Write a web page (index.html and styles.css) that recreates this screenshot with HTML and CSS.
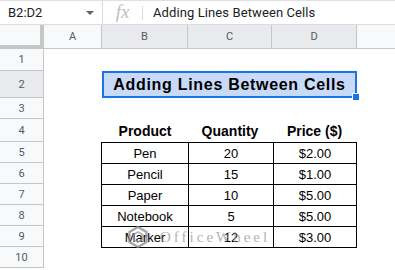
FILE: index.html
```html
<!DOCTYPE html>
<html lang="en">
<head>
    <link rel="stylesheet" href="styles.css">
</head>
<body>
    <div class="formula-bar">
        <div class="name-box">
            <span>B2:D2</span>
            <span class="caret"></span>
        </div>
        <div class="fx">fx</div>
        <div class="formula-divider"></div>
        <div class="formula-text">Adding Lines Between Cells</div>
    </div>

    <div class="sheet">
        <!-- column headers -->
        <div class="corner"></div>
        <div class="col-head">A</div>
        <div class="col-head selected">B</div>
        <div class="col-head selected">C</div>
        <div class="col-head selected">D</div>
        <div class="col-head last"></div>

        <!-- row headers -->
        <div class="row-head r1">1</div>
        <div class="row-head r2 selected">2</div>
        <div class="row-head r3">3</div>
        <div class="row-head r4">4</div>
        <div class="row-head r5">5</div>
        <div class="row-head r6">6</div>
        <div class="row-head r7">7</div>
        <div class="row-head r8">8</div>
        <div class="row-head r9">9</div>
        <div class="row-head r10">10</div>

        <div class="title">
            Adding Lines Between Cells
            <span class="handle"></span>
        </div>

        <div class="head-cell b">Product</div>
        <div class="head-cell c">Quantity</div>
        <div class="head-cell d">Price ($)</div>

        <table class="data">
            <tr><td>Pen</td><td>20</td><td>$2.00</td></tr>
            <tr><td>Pencil</td><td>15</td><td>$1.00</td></tr>
            <tr><td>Paper</td><td>10</td><td>$5.00</td></tr>
            <tr><td>Notebook</td><td>5</td><td>$5.00</td></tr>
            <tr><td>Marker</td><td>12</td><td>$3.00</td></tr>
        </table>

        <div class="watermark">
            <svg width="20" height="22" viewBox="0 0 20 22">
                <polygon points="10,1 18.5,6 18.5,16 10,21 1.5,16 1.5,6" fill="none" stroke="#8a8a8a" stroke-width="2.4"/>
                <polygon points="10,6 14.5,8.5 14.5,13.5 10,16 5.5,13.5 5.5,8.5" fill="none" stroke="#9a9a9a" stroke-width="1.6"/>
            </svg>
            <span>OfficeWheel</span>
        </div>
    </div>
</body>
</html>
```

FILE: styles.css
```css
body {
    margin: 0;
    padding: 0;
    background-color: #fff;
    font-family: Roboto, "Liberation Sans", Arial, sans-serif;
    overflow: hidden;
}

.formula-bar {
    display: flex;
    align-items: center;
    height: 23px;
    border-top: 1px solid #e0e0e0;
    border-bottom: 1px solid #dadce0;
    font-size: 13px;
    color: #202124;
}

.name-box {
    display: flex;
    align-items: center;
    justify-content: space-between;
    width: 86px;
    height: 100%;
    padding: 0 8px 0 8px;
    border-right: 1px solid #dadce0;
}

.caret {
    width: 0;
    height: 0;
    border-left: 4px solid transparent;
    border-right: 4px solid transparent;
    border-top: 4px solid #5f6368;
    margin-top: 1px;
}

.fx {
    width: 39px;
    text-align: center;
    font-family: "Liberation Serif", serif;
    font-style: italic;
    font-size: 19px;
    color: #c0c0c0;
    margin-top: -2px;
}

.formula-divider {
    width: 1px;
    height: 14px;
    background-color: #dadce0;
}

.formula-text {
    padding-left: 10px;
    letter-spacing: 0.1px;
}

.sheet {
    position: relative;
    display: grid;
    grid-template-columns: 44px 58px 86px 84px 85px 1fr;
    grid-template-rows: 24px 22px 27px 21px 23px repeat(6, 21px);
}

.corner {
    grid-column: 1;
    grid-row: 1;
    background-color: #f8f9fa;
    border-right: 4px solid #c4c7c5;
    border-bottom: 4px solid #c4c7c5;
}

.col-head {
    grid-row: 1;
    display: flex;
    align-items: center;
    justify-content: center;
    background-color: #f8f9fa;
    border-right: 1px solid #c4c7c5;
    border-bottom: 1px solid #c4c7c5;
    font-size: 11px;
    color: #575a5e;
}

.col-head.selected {
    background-color: #e8eaed;
}

.col-head.last {
    border-right: none;
}

.row-head {
    grid-column: 1;
    display: flex;
    align-items: center;
    justify-content: center;
    background-color: #f8f9fa;
    border-right: 1px solid #c4c7c5;
    border-bottom: 1px solid #c4c7c5;
    font-size: 11px;
    color: #575a5e;
}

.row-head.selected {
    background-color: #e8eaed;
}

.r1 { grid-row: 2; }
.r2 { grid-row: 3; }
.r3 { grid-row: 4; }
.r4 { grid-row: 5; }
.r5 { grid-row: 6; }
.r6 { grid-row: 7; }
.r7 { grid-row: 8; }
.r8 { grid-row: 9; }
.r9 { grid-row: 10; }
.r10 { grid-row: 11; }

.title {
    position: relative;
    grid-column: 3 / 6;
    grid-row: 3;
    display: flex;
    align-items: center;
    justify-content: center;
    background-color: #c9daf8;
    border: 2px solid #1a73e8;
    font-family: "Liberation Sans", Arial, sans-serif;
    font-weight: bold;
    font-size: 16px;
    letter-spacing: 0.7px;
    color: #000;
}

.handle {
    position: absolute;
    right: -5px;
    bottom: -5px;
    width: 6px;
    height: 6px;
    background-color: #1a73e8;
    border: 1px solid #fff;
}

.head-cell {
    grid-row: 5;
    display: flex;
    align-items: flex-end;
    justify-content: center;
    padding-bottom: 3px;
    font-family: "Liberation Sans", Arial, sans-serif;
    font-weight: bold;
    font-size: 14px;
    color: #000;
}

.head-cell.b { grid-column: 3; }
.head-cell.c { grid-column: 4; }
.head-cell.d { grid-column: 5; }

.data {
    grid-column: 3 / 6;
    grid-row: 6 / 11;
    border-collapse: collapse;
    width: 256px;
    margin-left: -1px;
    table-layout: fixed;
    font-family: "Liberation Sans", Arial, sans-serif;
    font-size: 13px;
    color: #000;
}

.data td {
    border: 1px solid #000;
    height: 20px;
    padding: 0;
    text-align: center;
}

.data td:nth-child(1) { width: 86px; }
.data td:nth-child(2) { width: 84px; }

.watermark {
    position: absolute;
    left: 128px;
    top: 201px;
    display: flex;
    align-items: center;
    gap: 12px;
    opacity: 0.75;
}

.watermark span {
    font-family: "Liberation Serif", serif;
    font-size: 15px;
    letter-spacing: 3px;
    color: #9a9a9a;
}
```
